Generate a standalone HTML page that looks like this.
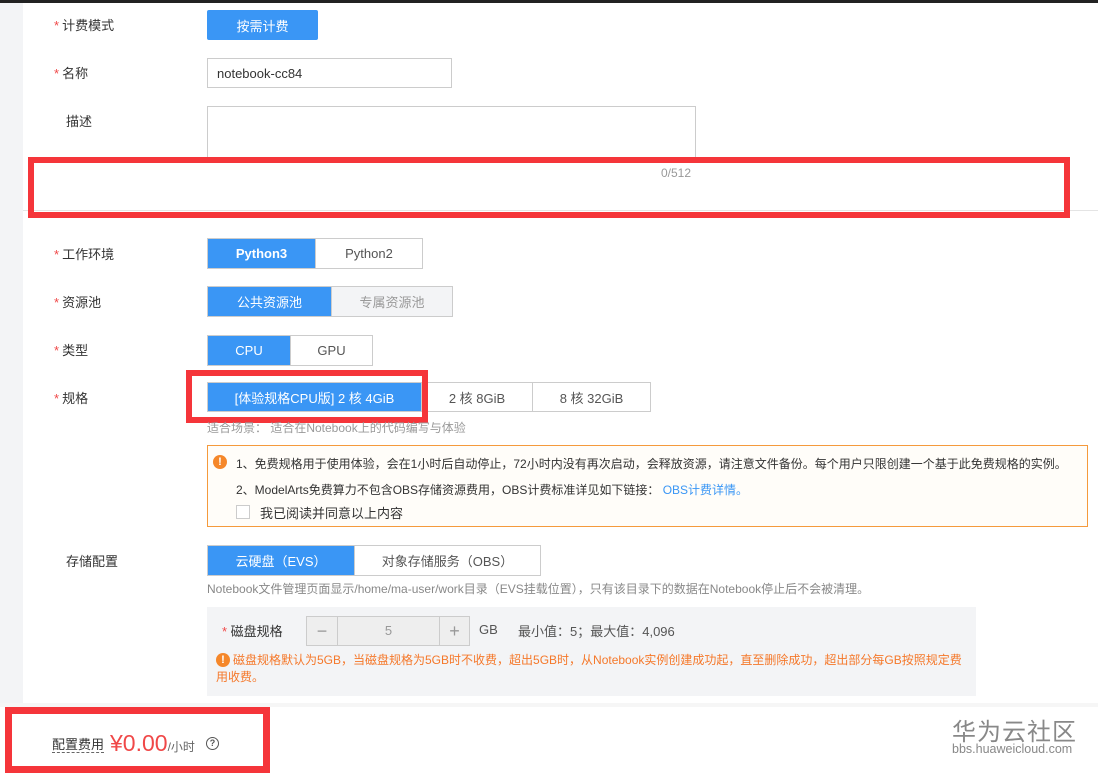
<!DOCTYPE html>
<html><head><meta charset="utf-8"><style>
*{box-sizing:border-box;margin:0;padding:0}
body{width:1098px;height:775px;position:relative;overflow:hidden;background:#fff;font-family:"Liberation Sans","Noto Sans CJK SC",sans-serif;font-size:13px;color:#333}
.a{position:absolute}
.lbl{position:absolute;left:54px;font-size:13px;color:#333}
.lbl i{color:#f04848;font-style:normal;margin-right:3px}
.seg{position:absolute;display:flex;height:31px;border:1px solid #ccc}
.seg div{display:flex;align-items:center;justify-content:center;height:100%;font-size:13px;color:#555;border-left:1px solid #ccc}
.seg div:first-child{border-left:none}
.seg .on{background:#3a96f5;color:#fff}
.rb{position:absolute;border:6px solid #f5353a}
</style></head><body>
<div class="a" style="left:0;top:0;width:1098px;height:3px;background:#222"></div>
<div class="a" style="left:0;top:3px;width:23px;height:700px;background:#f3f4f6"></div>

<div class="lbl" style="top:15px"><i>*</i>计费模式</div>
<div class="a" style="left:207px;top:10px;width:111px;height:30px;background:#3a96f5;border-radius:2px;color:#fff;display:flex;align-items:center;justify-content:center">按需计费</div>

<div class="lbl" style="top:63px"><i>*</i>名称</div>
<div class="a" style="left:207px;top:58px;width:245px;height:30px;border:1px solid #ccc;padding:7px 9px;color:#333">notebook-cc84</div>

<div class="lbl" style="top:111px;left:66px">描述</div>
<div class="a" style="left:207px;top:106px;width:489px;height:52px;border:1px solid #ccc"></div>
<div class="a" style="left:661px;top:166px;font-size:12px;color:#999">0/512</div>
<div class="a" style="left:23px;top:210px;width:1075px;height:1px;background:#e4e4e4"></div>
<div class="rb" style="left:28px;top:157px;width:1042px;height:61px"></div>

<div class="lbl" style="top:244px"><i>*</i>工作环境</div>
<div class="seg" style="left:207px;top:238px"><div class="on" style="width:107px;font-weight:bold">Python3</div><div style="width:107px">Python2</div></div>

<div class="lbl" style="top:292px"><i>*</i>资源池</div>
<div class="seg" style="left:207px;top:286px"><div class="on" style="width:123px">公共资源池</div><div style="width:121px;background:#f3f4f6;color:#999">专属资源池</div></div>

<div class="lbl" style="top:340px"><i>*</i>类型</div>
<div class="seg" style="left:207px;top:335px"><div class="on" style="width:82px">CPU</div><div style="width:82px">GPU</div></div>

<div class="lbl" style="top:388px"><i>*</i>规格</div>
<div class="seg" style="left:207px;top:382px;height:30px"><div class="on" style="width:213px">[体验规格CPU版] 2 核 4GiB</div><div style="width:111px">2 核 8GiB</div><div style="width:118px">8 核 32GiB</div></div>
<div class="rb" style="left:186px;top:370px;width:242px;height:53px"></div>
<div class="a" style="left:207px;top:419px;font-size:12px;color:#999">适合场景： 适合在Notebook上的代码编写与体验</div>

<div class="a" style="left:207px;top:445px;width:881px;height:82px;border:1px solid #f59a3c;background:#fffdf9"></div>
<div class="a" style="left:213px;top:455px;width:14px;height:14px;border-radius:50%;background:#f5872a;color:#fff;font-size:11px;font-weight:bold;text-align:center;line-height:14px">!</div>
<div class="a" style="left:236px;top:455px;font-size:12px;color:#333">1、免费规格用于使用体验，会在1小时后自动停止，72小时内没有再次启动，会释放资源，请注意文件备份。每个用户只限创建一个基于此免费规格的实例。</div>
<div class="a" style="left:236px;top:481px;font-size:12px;color:#333">2、ModelArts免费算力不包含OBS存储资源费用，OBS计费标准详见如下链接： <span style="color:#3a96f5">OBS计费详情。</span></div>
<div class="a" style="left:236px;top:505px;width:14px;height:14px;border:1px solid #ccc;background:#fff"></div>
<div class="a" style="left:260px;top:503px;font-size:13px;color:#333">我已阅读并同意以上内容</div>

<div class="lbl" style="top:551px;left:66px">存储配置</div>
<div class="seg" style="left:207px;top:545px;height:31px"><div class="on" style="width:146px">云硬盘（EVS）</div><div style="width:186px">对象存储服务（OBS）</div></div>
<div class="a" style="left:207px;top:580px;font-size:12px;color:#888">Notebook文件管理页面显示/home/ma-user/work目录（EVS挂载位置），只有该目录下的数据在Notebook停止后不会被清理。</div>

<div class="a" style="left:207px;top:607px;width:769px;height:89px;background:#f3f4f6"></div>
<div class="a" style="left:222px;top:621px;font-size:13px;color:#333"><span style="color:#f04848">*</span> 磁盘规格</div>
<div class="a" style="left:306px;top:616px;width:164px;height:30px;border:1px solid #ccc;background:#eee;display:flex">
<div style="width:31px;border-right:1px solid #ccc;text-align:center;line-height:28px;color:#999;font-size:18px">−</div>
<div style="flex:1;text-align:center;line-height:28px;color:#999">5</div>
<div style="width:30px;border-left:1px solid #ccc;text-align:center;line-height:28px;color:#999;font-size:18px">+</div></div>
<div class="a" style="left:479px;top:622px;color:#555">GB</div>
<div class="a" style="left:518px;top:621px;color:#555">最小值：5；最大值：4,096</div>
<div class="a" style="left:216px;top:653px;width:14px;height:14px;border-radius:50%;background:#f5872a;color:#fff;font-size:11px;font-weight:bold;text-align:center;line-height:14px">!</div>
<div class="a" style="left:216px;top:652px;width:750px;font-size:12px;line-height:17px;color:#f5782a;text-indent:17px">磁盘规格默认为5GB，当磁盘规格为5GB时不收费，超出5GB时，从Notebook实例创建成功起，直至删除成功，超出部分每GB按照规定费用收费。</div>

<div class="a" style="left:0;top:703px;width:1098px;height:4px;background:#f6f6f6"></div>
<div class="a" style="left:52px;top:737px;font-size:13px;color:#333;border-bottom:1px dashed #666;line-height:15px">配置费用</div>
<div class="a" style="left:110px;top:730px;font-size:23px;color:#f04848">¥0.00<span style="font-size:12px;color:#666">/小时</span></div>
<div class="a" style="left:206px;top:737px;width:13px;height:13px;border:1.5px solid #555;border-radius:50%;font-size:9px;text-align:center;line-height:10px;color:#555;font-weight:bold">?</div>
<div class="rb" style="left:5px;top:707px;width:265px;height:66px;border-width:7px"></div>

<div class="a" style="left:952px;top:712px;font-size:24px;color:#888;letter-spacing:1px">华为云社区</div>
<div class="a" style="left:952px;top:742px;font-size:12.5px;color:#888">bbs.huaweicloud.com</div>
</body></html>
